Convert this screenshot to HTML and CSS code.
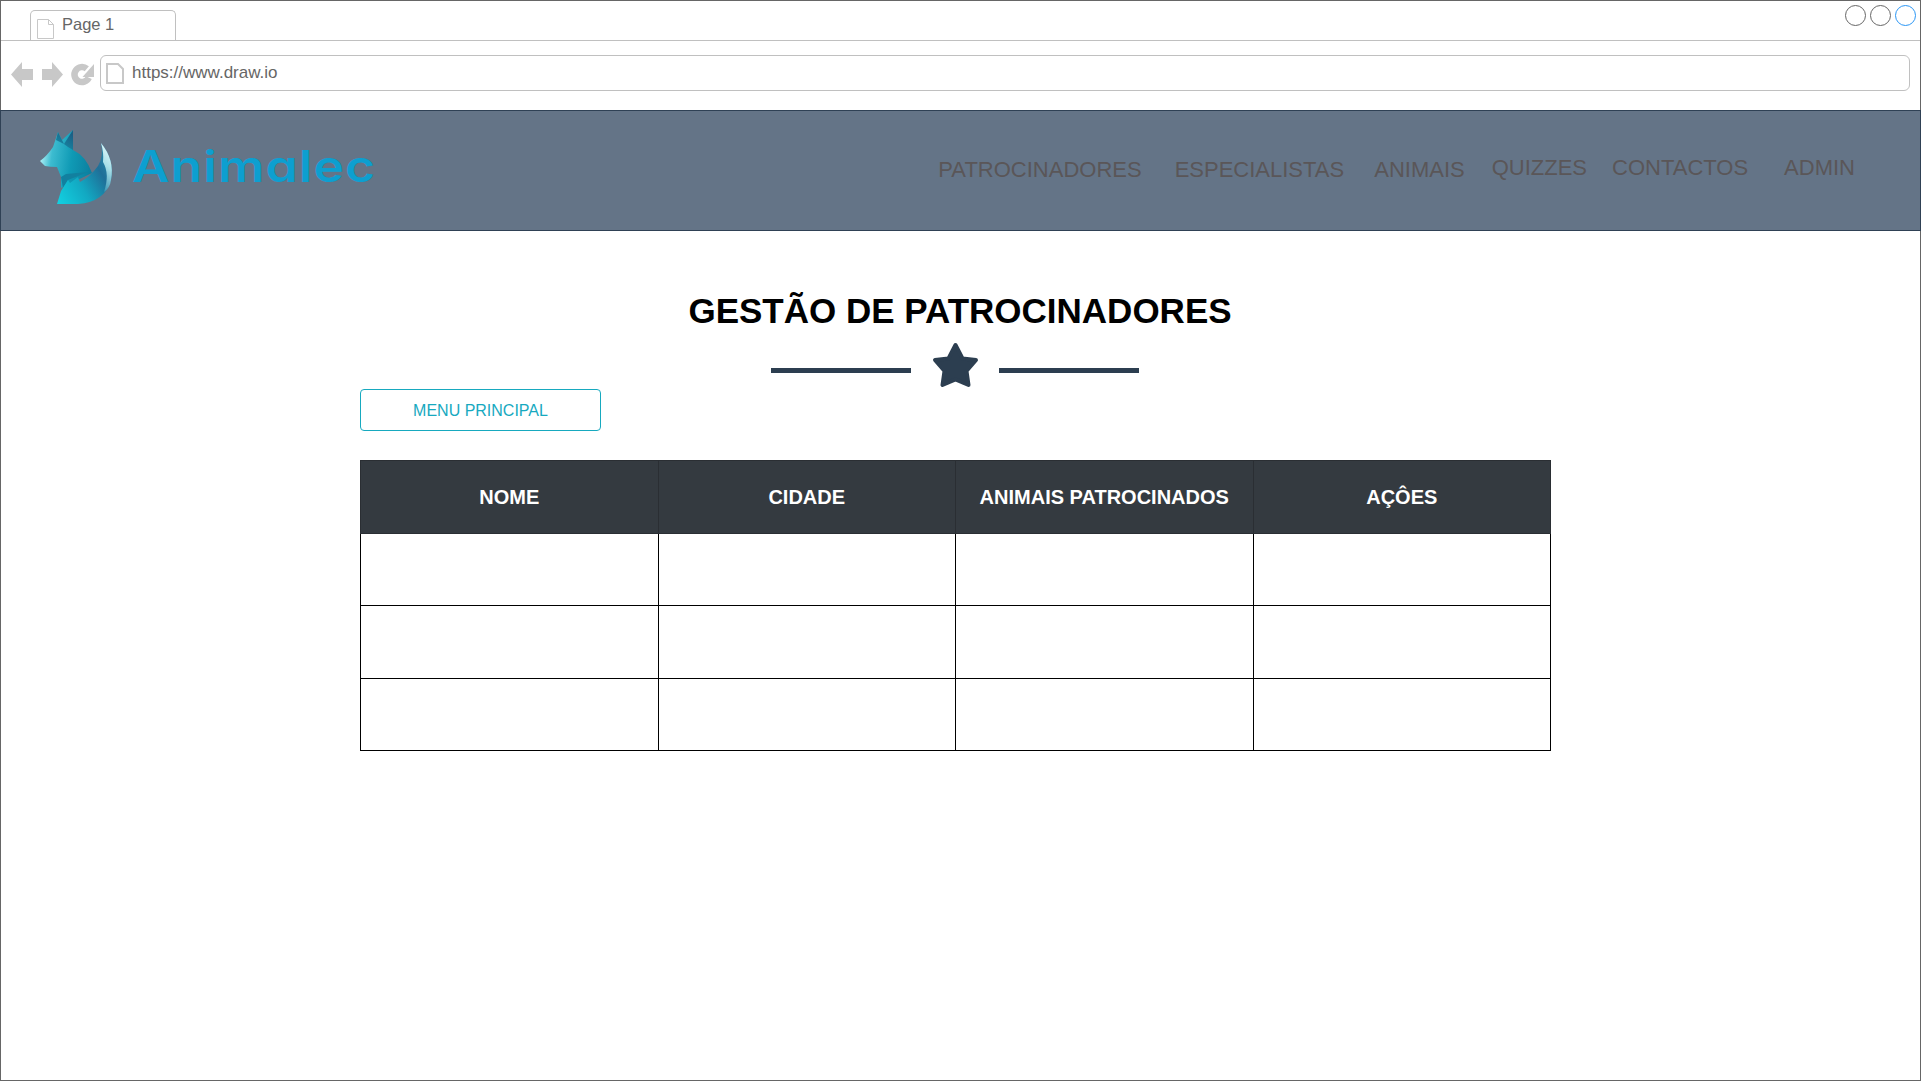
FILE: index.html
```html
<!DOCTYPE html>
<html lang="pt">
<head>
  <meta charset="UTF-8" />
  <title>Animalec - Gestão de Patrocinadores</title>
  <link rel="stylesheet" href="styles.css">
</head>
<body>
  <div class="frame">
    <div class="tabbar">
      <div class="tab">
        <svg class="page-icon" width="17" height="20" viewBox="0 0 17 20"><path d="M.5.5h11l5 5v14H.5z M11.5.5v5h5" fill="#fff" stroke="#c8c8c8"/></svg>
        <span>Page 1</span>
      </div>
      <div class="win-buttons">
        <span class="win-btn"></span>
        <span class="win-btn"></span>
        <span class="win-btn active"></span>
      </div>
    </div>

    <div class="addressbar">
      <svg class="nav-icons" width="88" height="26" viewBox="0 0 88 26">
        <path d="M11 0 0 12.500 11 25V18H22V7H11z" fill="#c8c8c8"/>
        <path d="M41 0 52 12.500 41 25V18H31V7H41z" fill="#c8c8c8"/>
        <path d="M75.800 6.800A7.500 7.500 0 1 0 77.800 15.700" fill="none" stroke="#c8c8c8" stroke-width="6.500"/>
        <path d="M83 2V15H71.500z" fill="#c8c8c8"/>
      </svg>
      <div class="url">
        <svg class="url-icon" width="18" height="21" viewBox="0 0 18 21"><path d="M1 1h11l5 5v14H1z" fill="#fff" stroke="#c8c8c8" stroke-width="2"/></svg>
        <span>https://www.draw.io</span>
      </div>
    </div>

    <header class="navbar">
      <div class="brand">
        <svg class="fox" width="110" height="90" viewBox="0 0 110 90">
          <defs>
            <linearGradient id="foxBody" x1="0" y1="0.45" x2="1" y2="0.6">
              <stop offset="0" stop-color="#b4f2f7"/>
              <stop offset="0.22" stop-color="#3dbcd0"/>
              <stop offset="0.6" stop-color="#0f9ab5"/>
              <stop offset="1" stop-color="#0b7f9f"/>
            </linearGradient>
            <linearGradient id="foxEar" x1="0" y1="1" x2="0.6" y2="0">
              <stop offset="0" stop-color="#1593ad"/>
              <stop offset="1" stop-color="#1b5f85"/>
            </linearGradient>
            <linearGradient id="foxTail" x1="0" y1="1" x2="1" y2="0.35">
              <stop offset="0" stop-color="#12d2e2"/>
              <stop offset="0.45" stop-color="#12a8c2"/>
              <stop offset="0.8" stop-color="#1f6f98"/>
              <stop offset="1" stop-color="#2a86a8"/>
            </linearGradient>
            <linearGradient id="foxTip" x1="0.3" y1="1" x2="0.5" y2="0">
              <stop offset="0" stop-color="#3a94b2"/>
              <stop offset="0.55" stop-color="#a8dfe8"/>
              <stop offset="1" stop-color="#e4f9fb"/>
            </linearGradient>
          </defs>
          <path d="M20 41Q27 36 33 27L38 12 42 20 53 10 53 30Q66 36 72 53L41 68 41 57 37 47Q30 47 25 46Z" fill="url(#foxBody)"/>
          <path d="M36 20 38 12 42 20 44 24Z M44 24 53 10 53 30 48 27Z" fill="url(#foxEar)"/>
          <path d="M41 57 46 54 68 52 48 60 43 68Z" fill="#12809f"/>
          <path d="M81 23Q95 40 91 60 85 82 58 84L37 84 41 71 48 60 50 63 58 57 60 62Q70 57 78 46 84 36 81 23Z" fill="url(#foxTail)"/>
          <path d="M81 23Q95 40 91 60 90 68 84 72 90 54 83 42 84 33 81 23Z" fill="url(#foxTip)"/>
        </svg>
        <span class="brand-name">Animalec</span>
      </div>
      <nav class="menu">
        <a class="low link-patro">PATROCINADORES</a>
        <a class="low link-espec">ESPECIALISTAS</a>
        <a class="low link-anim">ANIMAIS</a>
        <a class="link-quiz">QUIZZES</a>
        <a class="link-cont">CONTACTOS</a>
        <a class="link-admin">ADMIN</a>
      </nav>
    </header>

    <main class="content">
      <h1>GESTÃO DE PATROCINADORES</h1>
      <div class="divider">
        <span class="rule"></span>
        <svg class="star" width="50" height="46" viewBox="0 0 50 46"><path d="M24.500 3 31.500 16.500 45 18 35.500 29 37.500 43 24.500 37.500 11.500 43 13.500 29 4 18 17.500 16.500Z" fill="#2c3e50" stroke="#2c3e50" stroke-width="4" stroke-linejoin="round"/></svg>
        <span class="rule"></span>
      </div>
      <div class="actions">
        <button class="btn-outline">MENU PRINCIPAL</button>
      </div>
      <table class="grid">
        <thead>
          <tr><th>NOME</th><th>CIDADE</th><th>ANIMAIS PATROCINADOS</th><th>AÇÔES</th></tr>
        </thead>
        <tbody>
          <tr><td></td><td></td><td></td><td></td></tr>
          <tr class="tall"><td></td><td></td><td></td><td></td></tr>
          <tr><td></td><td></td><td></td><td></td></tr>
        </tbody>
      </table>
    </main>
  </div>
</body>
</html>
```

FILE: styles.css
```css
* {
  box-sizing: border-box;
}

html, body {
  margin: 0;
  height: 100%;
  background: #fff;
}

body {
  font-family: "Liberation Sans", Arial, sans-serif;
  overflow: hidden;
}

.frame {
  width: 1921px;
  height: 1081px;
  border: 1px solid #666;
  display: flex;
  flex-direction: column;
}

/* browser chrome */
.tabbar {
  height: 40px;
  border-bottom: 1px solid #c0c0c0;
  display: flex;
  justify-content: space-between;
  align-items: flex-start;
  padding-left: 29px;
}

.tab {
  width: 146px;
  height: 30px;
  margin-top: 9px;
  border: 1px solid #c0c0c0;
  border-bottom: none;
  border-radius: 5px 5px 0 0;
  background: #fff;
  display: flex;
  align-items: center;
  gap: 8px;
  padding: 0 0 2px 6px;
  font-size: 16.500px;
  color: #666;
}

.page-icon {
  margin-top: 9px;
}

.win-buttons {
  display: flex;
  gap: 4px;
  margin-top: 4px;
  padding-right: 4px;
}

.win-btn {
  width: 21px;
  height: 21px;
  border: 1.500px solid #666;
  border-radius: 50%;
}

.win-btn.active {
  border-color: #2a96f5;
}

.addressbar {
  height: 69px;
  display: flex;
  align-items: flex-start;
  padding: 14px 10px 0 10px;
}

.nav-icons {
  margin-top: 7px;
  flex: none;
}

.url {
  flex: 1;
  height: 36px;
  margin-left: 1px;
  border: 1px solid #c0c0c0;
  border-radius: 6px;
  display: flex;
  align-items: center;
  gap: 8px;
  padding-left: 5px;
  font-size: 17px;
  color: #666;
}

/* site header */
.navbar {
  height: 121px;
  margin: 0 -1px;
  background: #647487;
  border: 1px solid #2f4155;
  display: flex;
  justify-content: space-between;
}

.brand {
  display: flex;
  align-items: flex-start;
  padding: 9px 0 0 19px;
}

.fox {
  flex: none;
}

.brand-name {
  margin: 20px 0 0 2px;
  font-family: Inter, "Open Sans", sans-serif;
  font-feature-settings: "cv11";
  font-size: 44px;
  font-weight: 600;
  letter-spacing: 1px;
  line-height: 52px;
  color: #0d9fd0;
  transform: scaleX(1.17);
  transform-origin: left center;
}

.menu {
  display: flex;
  align-items: flex-start;
  padding-right: 65px;
  font-size: 22px;
  color: #5a5658;
}

.menu a {
  margin-top: 44px;
  line-height: 26px;
}

.menu a.low {
  margin-top: 46px;
}

.link-espec { margin-left: 33px; }
.link-anim { margin-left: 30px; }
.link-quiz { margin-left: 27px; }
.link-cont { margin-left: 25px; }
.link-admin { margin-left: 36px; }

/* page content */
.content {
  width: 1191px;
  margin-left: 359px;
}

h1 {
  margin: 59px 0 0;
  padding-left: 9px;
  font-size: 35px;
  line-height: 42px;
  text-align: center;
  color: #000;
}

.divider {
  display: flex;
  align-items: center;
  margin: 10px 0 0 411px;
  height: 46px;
}

.rule {
  width: 140px;
  height: 5px;
  margin-top: 10px;
  background: #2c3e50;
}

.star {
  margin: 0 18px 0 20px;
  flex: none;
}

.actions {
  margin-top: 1px;
}

.btn-outline {
  width: 241px;
  height: 42px;
  border: 1px solid #17a9bf;
  border-radius: 4px;
  background: #fff;
  color: #17a9bf;
  font-family: inherit;
  font-size: 16px;
  padding: 2px 0 0;
}

.grid {
  width: 1191px;
  margin-top: 29px;
  border-collapse: collapse;
  table-layout: fixed;
}

.grid th, .grid td {
  border: 1px solid #000;
}

.grid th {
  height: 73px;
  background: #343a40;
  border-color: #2a2e33;
  color: #fff;
  font-size: 20px;
  font-weight: bold;
}

.grid td {
  height: 72px;
}

.grid .tall td {
  height: 73px;
}
```
